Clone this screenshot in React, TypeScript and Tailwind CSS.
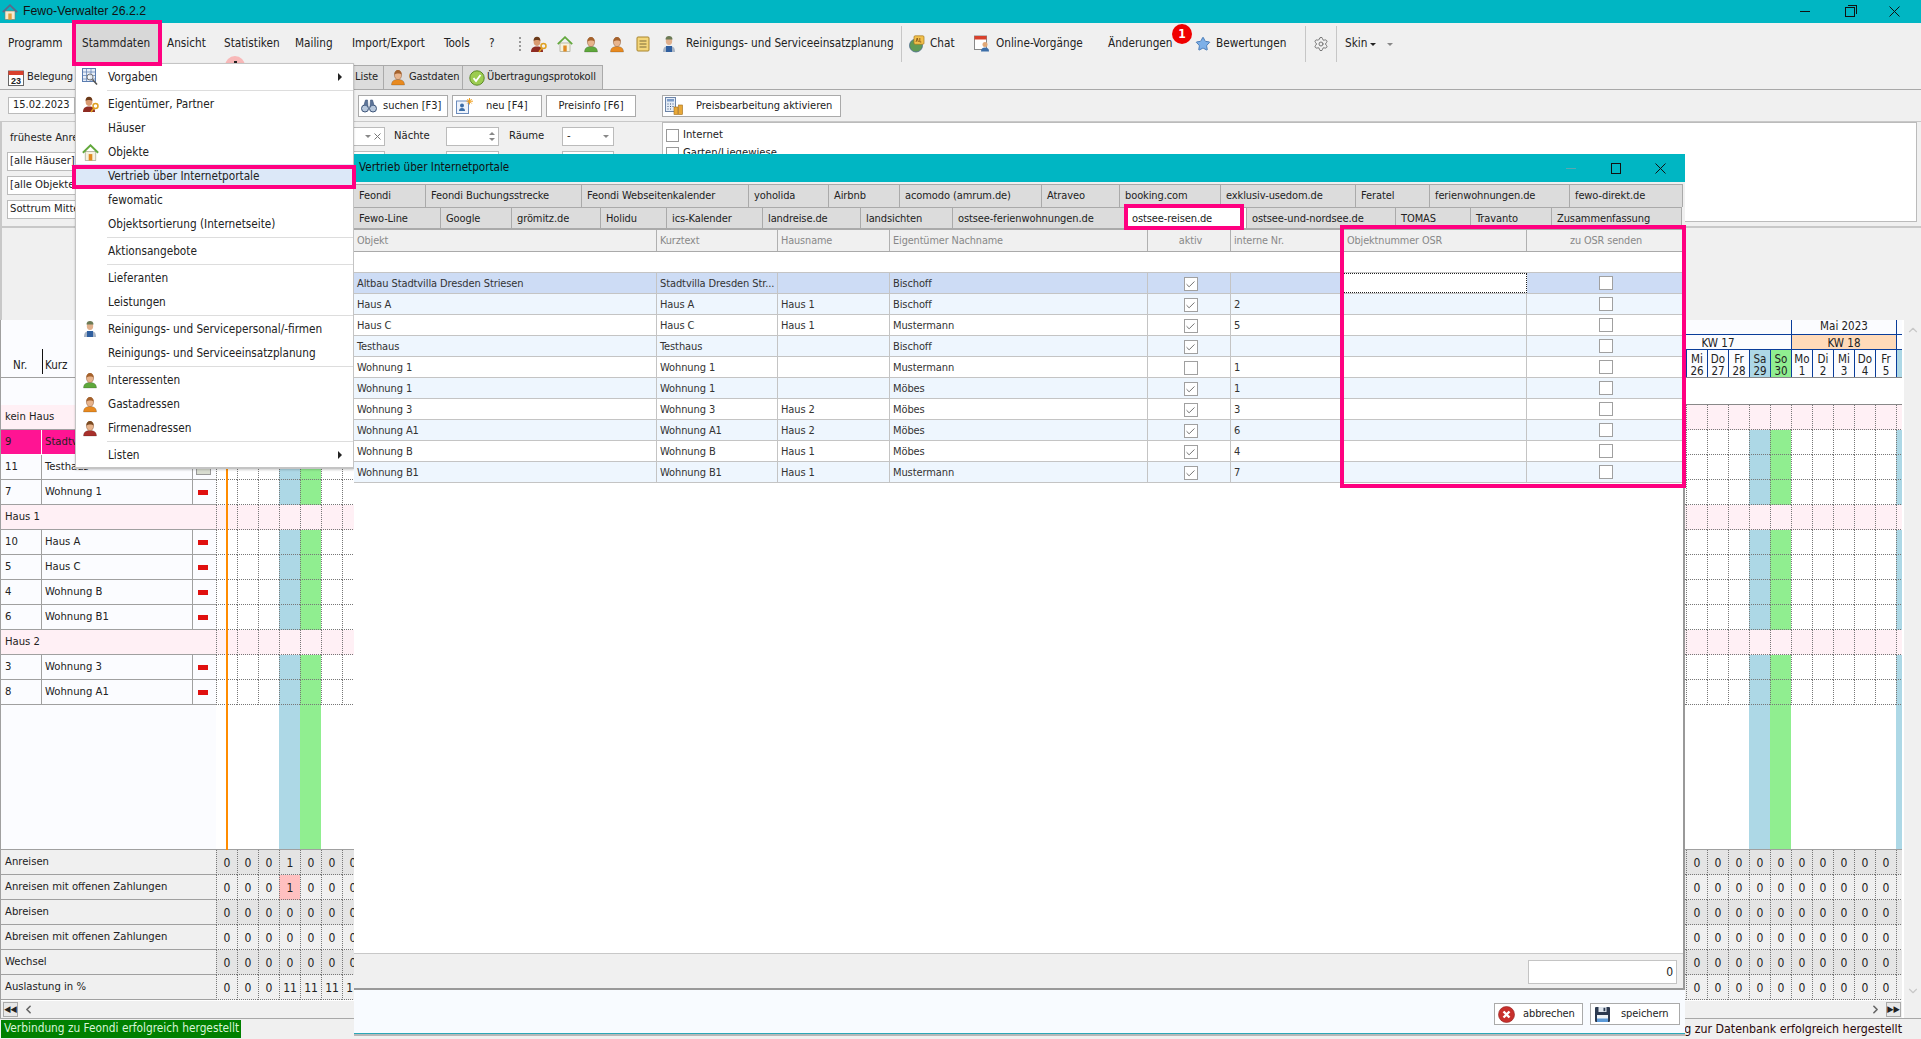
import React from "react"
import { Check, ChevronDown, ChevronLeft, ChevronRight, ChevronUp, Settings, Star } from "lucide-react"

// --- small drawn icons ---

function Person({ shirt = "#5fa83c", skin = "#e8b48c", hair = "#a5622c" }: { shirt?: string; skin?: string; hair?: string }) {
  return (
    <svg width="16" height="17" viewBox="0 0 16 17" className="shrink-0">
      <path d="M1.5 16c0-4 2.5-5.500 6.500-5.500s6.500 1.500 6.500 5.500z" fill={shirt} stroke="#00000055" strokeWidth=".5" />
      <ellipse cx="8" cy="6" rx="3.600" ry="4.600" fill={skin} stroke="#8a5a3a" strokeWidth=".5" />
      <path d="M4.400 5.500C4.400 2.500 6 1 8 1s3.600 1.500 3.600 4.500C10.500 4 6 4 4.400 5.500z" fill={hair} />
    </svg>
  )
}

function Owner() {
  return (
    <svg width="18" height="17" viewBox="0 0 18 17" className="shrink-0">
      <path d="M1 16c0-4 2-5.500 6-5.500s6 1.500 6 5.500z" fill="#8e2a22" />
      <ellipse cx="7" cy="5.500" rx="3.400" ry="4.400" fill="#d99a70" />
      <path d="M3.600 5C3.600 2 5 .8 7 .8S10.400 2 10.400 5C9 3.600 5 3.600 3.600 5z" fill="#6a3a1a" />
      <circle cx="13.500" cy="10" r="2.500" fill="none" stroke="#e0a020" strokeWidth="1.500" />
      <path d="M12 12l-3 4" stroke="#e0a020" strokeWidth="1.500" />
    </svg>
  )
}

function Worker() {
  return (
    <svg width="16" height="18" viewBox="0 0 16 18" className="shrink-0">
      <path d="M2 17c0-4.500 2-6 6-6s6 1.500 6 6z" fill="#a8b4c4" />
      <rect x="5" y="11" width="6" height="6" fill="#2f5f9f" />
      <ellipse cx="8" cy="6" rx="3.200" ry="4" fill="#e0b08c" />
      <path d="M4.500 4.500C4.500 2 6 1 8 1s3.500 1 3.500 3.500z" fill="#6b7a55" />
    </svg>
  )
}

function HouseIcon({ size = 16 }: { size?: number }) {
  return (
    <svg width={size} height={size} viewBox="0 0 16 16" className="shrink-0">
      <rect x="3" y="7" width="10" height="8.500" fill="#f6f2df" stroke="#9a9a80" strokeWidth=".6" />
      <path d="M.8 8.200 8 1.200l7.200 7" fill="none" stroke="#62a83c" strokeWidth="1.800" />
      <rect x="6.300" y="9.500" width="3.400" height="6" fill="#e08a20" />
    </svg>
  )
}

function AppHouse() {
  return (
    <svg width="16" height="16" viewBox="0 0 16 16" className="shrink-0">
      <rect x="3" y="7" width="10" height="8.500" fill="#f4ead0" stroke="#7a7a6a" strokeWidth=".6" />
      <path d="M.8 8.200 8 1.200l7.200 7" fill="none" stroke="#5a6a8a" strokeWidth="1.800" />
      <rect x="6.300" y="9.500" width="3.400" height="6" fill="#e0a040" />
    </svg>
  )
}

function CalendarIcon() {
  return (
    <svg width="16" height="17" viewBox="0 0 16 17" className="shrink-0">
      <rect x=".5" y="2" width="15" height="14.500" fill="#fff" stroke="#666" />
      <rect x=".5" y="2" width="15" height="4" fill="#d8402c" />
      <text x="8" y="14.500" fontSize="9" fontWeight="700" textAnchor="middle" fill="#222" fontFamily="Liberation Sans">23</text>
    </svg>
  )
}

function Notebook() {
  return (
    <svg width="14" height="16" viewBox="0 0 14 16" className="shrink-0">
      <rect x="1" y="1" width="12" height="14" rx="1" fill="#f4d67a" stroke="#a8842c" />
      <path d="M3.500 5h7M3.500 8h7M3.500 11h7" stroke="#7a6a3a" />
    </svg>
  )
}

function ChatIcon() {
  return (
    <svg width="16" height="18" viewBox="0 0 16 18" className="shrink-0">
      <circle cx="7" cy="10.500" r="6.500" fill="#5f9a55" stroke="#46688a" strokeWidth=".8" />
      <rect x="5" y=".8" width="10" height="8.500" rx="1.200" fill="#f2c04c" stroke="#a87a1c" strokeWidth=".7" />
      <path d="M7 7l1.200-4 1.200 4M10.800 3v4h1.500" fill="none" stroke="#7a4a10" strokeWidth=".8" />
    </svg>
  )
}

function OnlineIcon() {
  return (
    <svg width="16" height="17" viewBox="0 0 16 17" className="shrink-0">
      <rect x=".5" y="1" width="12" height="13.500" fill="#fff" stroke="#888" />
      <rect x=".5" y="1" width="12" height="3.500" fill="#d8402c" />
      <circle cx="11" cy="9.500" r="2.500" fill="#e0a878" />
      <path d="M7 16.500c0-3 1.500-4 4-4s4 1 4 4z" fill="#3c6ea8" />
    </svg>
  )
}

function Binoculars() {
  return (
    <svg width="16" height="14" viewBox="0 0 16 14" className="shrink-0">
      <circle cx="4" cy="9.500" r="3.500" fill="#b8c8dc" stroke="#3c5478" />
      <circle cx="12" cy="9.500" r="3.500" fill="#b8c8dc" stroke="#3c5478" />
      <path d="M3 6l1.500-5h2L7 8M13 6l-1.500-5h-2L9 8" fill="#5c7498" stroke="#3c5478" strokeWidth=".6" />
    </svg>
  )
}

function NewCard() {
  return (
    <svg width="17" height="16" viewBox="0 0 17 16" className="shrink-0">
      <rect x=".5" y="3" width="12" height="12.500" fill="#eef3fb" stroke="#6c8cbc" />
      <circle cx="6" cy="7.500" r="2" fill="#3c6ea8" />
      <path d="M3 13c0-2 1-3 3-3s3 1 3 3z" fill="#3c6ea8" />
      <path d="M13.500 0v6.500M10.500 3.200h6.500M11.300 1l4.400 4.500M15.700 1l-4.400 4.500" stroke="#f0a020" />
    </svg>
  )
}

function CalcIcon() {
  return (
    <svg width="18" height="18" viewBox="0 0 18 18" className="shrink-0">
      <rect x=".5" y=".5" width="10" height="14" fill="#e4ecf6" stroke="#6c84a8" />
      <rect x="2" y="2" width="7" height="2.500" fill="#7c9cc8" />
      <path d="M2.500 7h1M5 7h1M7.500 7h1M2.500 9.500h1M5 9.500h1M7.500 9.500h1M2.500 12h1M5 12h1" stroke="#3c5478" />
      <rect x="9" y="10" width="4" height="7.500" fill="#e8a838" stroke="#a06c18" strokeWidth=".6" />
      <rect x="13.500" y="8" width="4" height="9.500" fill="#e8a838" stroke="#a06c18" strokeWidth=".6" />
    </svg>
  )
}

function OkIcon() {
  return (
    <svg width="16" height="16" viewBox="0 0 16 16" className="shrink-0">
      <circle cx="8" cy="8" r="7.200" fill="#9ccc50" stroke="#5c8a28" />
      <path d="M4.500 8.200 7 11l4.500-6" fill="none" stroke="#fff" strokeWidth="1.800" />
    </svg>
  )
}

function VorgabenIcon() {
  return (
    <svg width="17" height="18" viewBox="0 0 17 18" className="shrink-0">
      <rect x=".5" y=".5" width="13" height="13" fill="#e8eff9" stroke="#5a7cb0" />
      <path d="M.5 4h13M.5 7.500h13M.5 11h13M4.500.5v13M9 .5v13" stroke="#5a7cb0" strokeWidth=".7" />
      <circle cx="8" cy="9" r="3" fill="#ffffffaa" stroke="#777" />
      <path d="M10.500 11.500 15 16.500" stroke="#555" strokeWidth="1.600" />
    </svg>
  )
}

function Cancel() {
  return (
    <svg width="17" height="17" viewBox="0 0 17 17" className="shrink-0">
      <circle cx="8.500" cy="8.500" r="8" fill="#c8302c" stroke="#902020" strokeWidth=".6" />
      <path d="M5.500 5.500l6 6M11.500 5.500l-6 6" stroke="#fff" strokeWidth="2.400" />
    </svg>
  )
}

function Floppy() {
  return (
    <svg width="15" height="15" viewBox="0 0 15 15" className="shrink-0">
      <rect width="15" height="15" rx="1" fill="#2c3a50" />
      <rect x="3.500" y="0" width="8" height="5" fill="#dfe6ee" />
      <rect x="8.500" y=".8" width="1.800" height="3.400" fill="#2c3a50" />
      <rect x="2" y="8" width="11" height="7" fill="#eef3f8" />
      <rect x="2" y="11.500" width="11" height="3.500" fill="#5c9ad8" />
    </svg>
  )
}

function WinMin({ className = "" }: { className?: string }) {
  return <div className={`h-px w-[10px] ${className}`} />
}

function WinClose() {
  return (
    <svg width="11" height="11" viewBox="0 0 11 11">
      <path d="M.5.5l10 10M10.500.5l-10 10" stroke="#111" strokeWidth="1" />
    </svg>
  )
}

function WinCloseSmall() {
  return (
    <svg width="7" height="7" viewBox="0 0 7 7">
      <path d="M.5.5l6 6M6.500.5l-6 6" stroke="#777" />
    </svg>
  )
}

// --- app window top ---

function TitleBar() {
  return (
    <div className="flex h-[23px] items-center bg-[#00b6c3] pl-[2px]">
      <AppHouse />
      <span className="ml-[5px] font-['Liberation_Sans',sans-serif] text-[12.300px] text-[#111]">Fewo-Verwalter 26.2.2</span>
      <div className="ml-auto flex items-center">
        <div className="flex w-[45px] justify-center"><WinMin className="bg-[#111]" /></div>
        <div className="flex w-[45px] justify-center">
          <div className="relative h-[10px] w-[10px] border border-[#111] before:absolute before:-right-[3px] before:-top-[3px] before:h-[9px] before:w-[9px] before:border-r before:border-t before:border-[#111]" />
        </div>
        <div className="flex w-[46px] justify-center pr-[2px]"><WinClose /></div>
        <div className="w-[3px]" />
      </div>
    </div>
  )
}

const menuItems = [
  { label: "Programm", cls: "w-[76px] pl-[8px]" },
  { label: "Stammdaten", cls: "w-[91px] pl-[6px]" },
  { label: "Ansicht", cls: "w-[57px]" },
  { label: "Statistiken", cls: "w-[71px]" },
  { label: "Mailing", cls: "w-[57px]" },
  { label: "Import/Export", cls: "w-[92px]" },
  { label: "Tools", cls: "w-[45px]" },
  { label: "?", cls: "w-[25px]" },
]

function RibbonSep() {
  return <div className="h-[36px] w-px bg-[#c6c6c6]" />
}

function Ribbon() {
  return (
    <div className="flex h-[67px] flex-col border-b border-[#a8a8a8]">
      <div className="flex h-[42px] items-center">
        {menuItems.map((m) => (
          <div key={m.label} className={`flex h-full items-center ${m.cls} ${m.label === "Stammdaten" ? "relative" : ""}`}>
            {m.label === "Stammdaten" && <div className="absolute -top-[1px] bottom-0 left-0 w-[84px] bg-[#d8d8d8]" />}
            <span className="relative">{m.label}</span>
          </div>
        ))}
        <div className="flex w-[12px] flex-col items-center gap-[2px]">
          <div className="h-[2px] w-[2px] bg-[#999]" />
          <div className="h-[2px] w-[2px] bg-[#999]" />
          <div className="h-[2px] w-[2px] bg-[#999]" />
          <div className="h-[2px] w-[2px] bg-[#999]" />
        </div>
        <div className="flex w-[26px] justify-center"><Owner /></div>
        <div className="flex w-[26px] justify-center"><HouseIcon /></div>
        <div className="flex w-[26px] justify-center"><Person /></div>
        <div className="flex w-[26px] justify-center"><Person shirt="#e88a20" /></div>
        <div className="flex w-[26px] justify-center"><Notebook /></div>
        <div className="flex w-[26px] justify-center"><Worker /></div>
        <span className="ml-[4px] w-[215px]">Reinigungs- und Serviceeinsatzplanung</span>
        <RibbonSep />
        <div className="flex w-[72px] items-center pl-[7px]"><ChatIcon /><span className="ml-[5px]">Chat</span></div>
        <div className="flex w-[134px] items-center"><OnlineIcon /><span className="ml-[6px]">Online-Vorgänge</span></div>
        <span className="w-[87px]">Änderungen</span>
        <div className="flex w-[110px] items-center">
          <Star size={16} fill="#7db0e8" stroke="#4a7cb8" strokeWidth={1.500} />
          <span className="ml-[5px]">Bewertungen</span>
        </div>
        <RibbonSep />
        <div className="flex w-[30px] justify-center"><Settings size={16} stroke="#777" strokeWidth={1.500} /></div>
        <RibbonSep />
        <span className="ml-[8px]">Skin</span>
        <div className="ml-[3px] h-0 w-0 border-x-[3px] border-t-[3px] border-x-transparent border-t-[#222]" />
        <div className="ml-[11px] h-0 w-0 border-x-[3px] border-t-[3px] border-x-transparent border-t-[#888]" />
      </div>
      <div className="flex h-[24px] items-stretch whitespace-nowrap pl-[5px] text-[11px] tracking-[-0.1px]">
        <div className="flex w-[70px] items-center gap-[3px] pl-[3px]"><CalendarIcon />Belegung</div>
        <div className="ml-[225px] flex w-[84px] items-center justify-end border border-b-0 border-[#aaa] bg-[#dcdcdc] pr-[5px]">Liste</div>
        <div className="flex w-[79px] items-center gap-[3px] border-r border-t border-[#aaa] bg-[#dcdcdc] pl-[6px]">
          <Person shirt="#e88a20" />Gastdaten
        </div>
        <div className="flex w-[140px] items-center gap-[2px] border-r border-t border-[#aaa] bg-[#dcdcdc] pl-[6px]">
          <OkIcon />Übertragungsprotokoll
        </div>
      </div>
    </div>
  )
}

function ActionButton({ className, children }: { className: string; children: React.ReactNode }) {
  return <div className={`flex h-[22px] items-center whitespace-nowrap border border-[#aaa] bg-white pt-[1px] ${className}`}>{children}</div>
}

function ActionRow() {
  return (
    <div className="flex h-[32px] items-center border-b border-[#c8c8c8] pl-[8px] text-[11px]">
      <div className="flex h-[17px] w-[67px] items-center border border-[#bbb] bg-white pl-[4px]">15.02.2023</div>
      <ActionButton className="ml-[283px] w-[90px] pl-[2px]">
        <Binoculars />
        <span className="ml-[6px]">suchen [F3]</span>
      </ActionButton>
      <ActionButton className="ml-[4px] w-[90px] pl-[3px]">
        <NewCard />
        <span className="ml-[13px]">neu [F4]</span>
      </ActionButton>
      <ActionButton className="ml-[4px] w-[90px] justify-center">Preisinfo [F6]</ActionButton>
      <ActionButton className="ml-[26px] w-[179px] pl-[2px]">
        <CalcIcon />
        <span className="ml-[13px]">Preisbearbeitung aktivieren</span>
      </ActionButton>
    </div>
  )
}

function FilterPanel() {
  const box = "flex h-[19px] items-center border border-[#bbb] bg-white"
  const leftBox = "flex h-[19px] w-[130px] items-center whitespace-nowrap border border-[#bbb] bg-white pl-[2px] pt-[1px]"
  return (
    <div className="flex h-[106px] items-start border-b-2 border-l-2 border-[#c8c8c8] text-[11.200px]">
      <div className="flex w-[73px] flex-col pl-[5px] pt-[8px]">
        <span className="whitespace-nowrap pl-[3px]">früheste Anreise</span>
        <div className={`${leftBox} mt-[5px]`}>[alle Häuser]</div>
        <div className={`${leftBox} mt-[5px]`}>[alle Objekte]</div>
        <div className={`${leftBox} mt-[5px]`}>Sottrum Mitte</div>
      </div>
      <div className="flex w-[587px] flex-col pl-[277px] pt-[5px]">
        <div className="flex items-center">
          <div className={`${box} w-[33px] justify-end gap-[3px] pr-[3px] text-[#777]`}>
            <div className="h-0 w-0 border-x-[3px] border-t-[3px] border-x-transparent border-t-[#888]" />
            <WinCloseSmall />
          </div>
          <span className="ml-[9px] w-[52px]">Nächte</span>
          <div className={`${box} w-[53px] flex-col items-end justify-center gap-[3px] pr-[3px]`}>
            <div className="h-0 w-0 border-x-[3px] border-b-[3px] border-x-transparent border-b-[#888]" />
            <div className="h-0 w-0 border-x-[3px] border-t-[3px] border-x-transparent border-t-[#888]" />
          </div>
          <span className="ml-[10px] w-[53px]">Räume</span>
          <div className={`${box} w-[52px] justify-between px-[4px]`}>
            -
            <div className="h-0 w-0 border-x-[3px] border-t-[3px] border-x-transparent border-t-[#888]" />
          </div>
        </div>
        <div className="mt-[5px] flex items-center">
          <div className={`${box} w-[33px]`} />
          <div className={`${box} ml-[61px] w-[53px]`} />
          <div className={`${box} ml-[63px] w-[52px]`} />
        </div>
      </div>
      <div className="h-[100px] w-[1255px] border border-[#bbb] bg-white pl-[3px] pt-[3px]">
        <div className="flex h-[18px] items-center gap-[4px]"><div className="h-[13px] w-[13px] border border-[#999] bg-white" />Internet</div>
        <div className="flex h-[18px] items-center gap-[4px]"><div className="h-[13px] w-[13px] border border-[#999] bg-white" />Garten/Liegewiese</div>
      </div>
    </div>
  )
}

// --- planner grid ---

const DAY_COUNT = 81
const days = Array.from({ length: DAY_COUNT }, (_, i) => new Date(2023, 1, 15 + i))
const DAY_NAMES = ["So", "Mo", "Di", "Mi", "Do", "Fr", "Sa"]
const MONTH_NAMES = ["Januar", "Februar", "März", "April", "Mai"]

function isoWeek(d: Date) {
  const t = new Date(d.getFullYear(), d.getMonth(), d.getDate())
  t.setDate(t.getDate() + 3 - ((t.getDay() + 6) % 7))
  const jan4 = new Date(t.getFullYear(), 0, 4)
  return 1 + Math.round(((t.getTime() - jan4.getTime()) / 86400000 - 3 + ((jan4.getDay() + 6) % 7)) / 7)
}

// the last column is only a sliver, month and week cells stop before it
function groupBy(key: (d: Date) => number) {
  const groups: { key: number; count: number }[] = []
  days.slice(0, DAY_COUNT - 1).forEach((d) => {
    const last = groups[groups.length - 1]
    if (last && last.key === key(d)) last.count++
    else groups.push({ key: key(d), count: 1 })
  })
  return groups
}

function DayCells({ group }: { group: boolean }) {
  return (
    <div className="flex h-full w-[1686px] overflow-hidden">
      {days.map((d, i) => {
        const wd = d.getDay()
        const bg = group ? "bg-[#fff0f5]" : wd === 6 ? "bg-[#add8e6]" : wd === 0 ? "bg-[#90ee90]" : "bg-white"
        return <div key={i} className={`h-full w-[21px] shrink-0 border-b border-l border-dotted border-[#777] ${bg}`} />
      })}
    </div>
  )
}

function PlainCells() {
  return (
    <div className="flex h-full w-[1686px] overflow-hidden">
      {days.map((d, i) => {
        const wd = d.getDay()
        const bg = wd === 6 ? "bg-[#add8e6]" : wd === 0 ? "bg-[#90ee90]" : "bg-white"
        return <div key={i} className={`h-full w-[21px] shrink-0 ${bg}`} />
      })}
    </div>
  )
}

function GroupRow({ label }: { label: string }) {
  return (
    <div className="flex h-[25px]">
      <div className="flex w-[215px] items-center border-b border-[#a0a0a0] bg-[#fff0f5] pl-[4px] pt-[1px]">{label}</div>
      <DayCells group />
    </div>
  )
}

function ObjectRow({ nr, name, active, icon }: { nr: string; name: string; active?: boolean; icon?: boolean }) {
  return (
    <div className="flex h-[25px]">
      <div className={`flex w-[41px] items-center border-b border-r pl-[4px] pt-[1px] ${active ? "border-white bg-[#ff1493]" : "border-[#a0a0a0] bg-[#fbfcff]"}`}>{nr}</div>
      <div className={`flex w-[151px] items-center border-b border-r pl-[3px] pt-[1px] ${active ? "border-white bg-[#ff1493]" : "border-[#a0a0a0] bg-[#fbfcff]"}`}>{name}</div>
      <div className="flex w-[23px] items-center justify-center border-b border-[#a0a0a0] bg-[#fbfcff] pr-[3px]">
        {icon ? <div className="mt-[4px] h-[11px] w-[15px] border border-[#999] bg-[#d8dcd0]" /> : <div className="h-[5px] w-[10px] bg-[#e01010]" />}
      </div>
      <DayCells group={false} />
    </div>
  )
}

const summaryRows = [
  { label: "Anreisen", values: { 3: "1" } as Record<number, string> },
  { label: "Anreisen mit offenen Zahlungen", values: { 3: "1" } as Record<number, string> },
  { label: "Abreisen", values: {} as Record<number, string> },
  { label: "Abreisen mit offenen Zahlungen", values: {} as Record<number, string> },
  { label: "Wechsel", values: {} as Record<number, string> },
  { label: "Auslastung in %", values: { 3: "11", 4: "11", 5: "11", 6: "11" } as Record<number, string> },
]

function SummaryRow({ index }: { index: number }) {
  const row = summaryRows[index]
  const shade = index % 2 === 0 ? "bg-[#e4e4e4]" : "bg-[#f0f0f0]"
  return (
    <div className="flex h-[25px]">
      <div className="flex w-[215px] items-center border-b border-[#a0a0a0] bg-[#f0f0f0] pl-[4px] pt-[1px]">{row.label}</div>
      <div className="flex h-full w-[1686px] overflow-hidden">
        {days.map((_, i) => {
          const warn = index === 1 && i === 3
          return (
            <div
              key={i}
              className={`flex h-full w-[21px] shrink-0 items-center justify-center border-b border-l border-dotted border-[#777] pt-[1px] text-[12px] ${warn ? "bg-[#ffc0c0]" : shade}`}
            >
              {i < DAY_COUNT - 1 ? row.values[i] ?? "0" : ""}
            </div>
          )
        })}
      </div>
    </div>
  )
}

function CalendarHead() {
  const months = groupBy((d) => d.getMonth())
  const weeks = groupBy(isoWeek)
  return (
    <div className="flex h-[58px] w-[1686px] flex-col overflow-hidden border-b border-[#888] bg-[#fbfcff] text-[11.500px]">
      <div className="flex h-[15px] shrink-0 border-b border-[#0a3d9a]">
        {months.map((m) => (
          <div
            key={m.key}
            style={{ width: m.count * 21 }}
            className="flex shrink-0 items-center justify-center border-l border-[#0a3d9a]"
          >
            {m.count > 3 ? `${MONTH_NAMES[m.key]} 2023` : ""}
          </div>
        ))}
        <div className="w-[21px] shrink-0 border-l border-[#0a3d9a]" />
      </div>
      <div className="flex h-[15px] shrink-0 border-b border-[#0a3d9a]">
        {weeks.map((w) => (
          <div
            key={w.key}
            style={{ width: w.count * 21 }}
            className={`flex shrink-0 items-center justify-center border-l border-[#0a3d9a] pt-[3px] ${w.key % 2 === 0 ? "bg-[#ffdab9]" : ""}`}
          >
            KW {w.key}
          </div>
        ))}
        <div className="w-[21px] shrink-0 border-l border-[#0a3d9a]" />
      </div>
      {[0, 1].map((r) => (
        <div key={r} className={`flex shrink-0 ${r === 0 ? "h-[15px]" : "h-[12px]"}`}>
          {days.map((d, i) => {
            const wd = d.getDay()
            const bg = wd === 6 ? "bg-[#add8e6]" : wd === 0 ? "bg-[#90ee90]" : ""
            return (
              <div key={i} className={`flex w-[21px] shrink-0 items-center justify-center border-l border-[#0a3d9a] ${r === 0 ? "pt-[4px]" : "pt-[2px]"} ${bg}`}>
                {i === DAY_COUNT - 1 ? "" : r === 0 ? DAY_NAMES[wd] : d.getDate()}
              </div>
            )
          })}
        </div>
      ))}
    </div>
  )
}

function Planner() {
  return (
    <div className="relative flex h-[698px] text-[11.200px]">
      <div className="flex w-[1902px] flex-col border-l border-[#a0a0a0]">
        <div className="flex h-[58px]">
          <div className="flex w-[215px] items-end border-b border-[#a0a0a0] bg-[#fbfcff] pb-[3px] text-[11.500px]">
            <span className="w-[41px] pl-[12px]">Nr.</span>
            <span className="border-l border-[#111] pl-[2px] pt-[8px]">Kurz</span>
          </div>
          <CalendarHead />
        </div>
        <div className="flex h-[27px] w-[1901px]">
          <div className="w-[215px] bg-[#fbfcff]" />
          <div className="flex-1 border-b border-[#888] bg-white" />
        </div>
        <GroupRow label="kein Haus" />
        <ObjectRow nr="9" name="Stadtvilla Dresden" active />
        <ObjectRow nr="11" name="Testhaus" icon />
        <ObjectRow nr="7" name="Wohnung 1" />
        <GroupRow label="Haus 1" />
        <ObjectRow nr="10" name="Haus A" />
        <ObjectRow nr="5" name="Haus C" />
        <ObjectRow nr="4" name="Wohnung B" />
        <ObjectRow nr="6" name="Wohnung B1" />
        <GroupRow label="Haus 2" />
        <ObjectRow nr="3" name="Wohnung 3" />
        <ObjectRow nr="8" name="Wohnung A1" />
        <div className="flex h-[145px] border-b border-[#a0a0a0]">
          <div className="w-[215px] bg-[#fbfcff]" />
          <PlainCells />
        </div>
        {summaryRows.map((r, i) => (
          <SummaryRow key={r.label} index={i} />
        ))}
        <div className="flex h-[18px] items-center border-t border-white pl-[2px] pr-[1px]">
          <div className="flex h-[15px] w-[15px] items-center justify-center border border-[#aaa] bg-[#e8e8e8] text-[9px] leading-none">◀◀</div>
          <ChevronLeft size={13} strokeWidth={3} className="ml-[4px] text-[#666]" />
          <ChevronRight size={13} strokeWidth={3} className="ml-auto mr-[4px] text-[#666]" />
          <div className="flex h-[15px] w-[15px] items-center justify-center border border-[#aaa] bg-[#e8e8e8] text-[9px] leading-none">▶▶</div>
        </div>
      </div>
      <div className="flex w-[19px] flex-col items-center border-l-2 border-white pb-[20px] pt-[2px]">
        <ChevronUp size={14} strokeWidth={2} className="mt-[1px] text-[#c8c8c8]" />
        <ChevronDown size={14} strokeWidth={2} className="mt-auto text-[#c8c8c8]" />
      </div>
      <div className="absolute bottom-[168px] left-[226px] top-[58px] w-[2px] bg-[#ff8c00]" />
    </div>
  )
}

function StatusBar() {
  return (
    <div className="flex h-[21px] items-center justify-between whitespace-nowrap border-t border-[#a8a8a8] pl-[1px] pr-[19px]">
      <div className="flex h-[18px] w-[240px] items-center bg-[#008000] pl-[3px] text-[11.800px] text-[#d8f5d8]">Verbindung zu Feondi erfolgreich hergestellt</div>
      <span className="text-[12.300px] text-[#2a0808]">Verbindung zur Datenbank erfolgreich hergestellt</span>
    </div>
  )
}

// --- Stammdaten dropdown ---

type MenuEntry = { label?: string; icon?: React.ReactNode; sub?: boolean; hot?: boolean }

const stammdatenMenu: MenuEntry[] = [
  { label: "Vorgaben", icon: <VorgabenIcon />, sub: true },
  {},
  { label: "Eigentümer, Partner", icon: <Owner /> },
  { label: "Häuser" },
  { label: "Objekte", icon: <HouseIcon size={17} /> },
  { label: "Vertrieb über Internetportale", hot: true },
  { label: "fewomatic" },
  { label: "Objektsortierung (Internetseite)" },
  {},
  { label: "Aktionsangebote" },
  {},
  { label: "Lieferanten" },
  { label: "Leistungen" },
  {},
  { label: "Reinigungs- und Servicepersonal/-firmen", icon: <Worker /> },
  { label: "Reinigungs- und Serviceeinsatzplanung" },
  {},
  { label: "Interessenten", icon: <Person /> },
  { label: "Gastadressen", icon: <Person shirt="#e88a20" /> },
  { label: "Firmenadressen", icon: <Person shirt="#a8302c" hair="#7a4a22" /> },
  {},
  { label: "Listen", sub: true },
]

function StammdatenMenu() {
  return (
    <div className="absolute left-[75px] top-[63px] flex h-[406px] w-[279px] flex-col border border-b-2 border-[#c4c4c4] bg-white pt-[1px] shadow-[0_1px_2px_#0003]">
      {stammdatenMenu.map((m, i) =>
        m.label ? (
          <div key={i} className={`flex h-[24px] shrink-0 items-center ${m.hot ? "bg-[#dce8f8]" : ""}`}>
            <div className="flex w-[32px] justify-start pl-[6px]">{m.icon}</div>
            <span className="pt-[2px]">{m.label}</span>
            {m.sub && <div className="ml-auto mr-[11px] h-0 w-0 border-y-[4px] border-l-[4px] border-y-transparent border-l-[#222]" />}
          </div>
        ) : (
          <div key={i} className="flex h-[3px] shrink-0 items-center pl-[31px]">
            <div className="h-px w-full bg-[#ddd]" />
          </div>
        ),
      )}
    </div>
  )
}

// --- portal dialog ---

const tabRowOne = [
  { label: "Feondi", w: "w-[72px]" },
  { label: "Feondi Buchungsstrecke", w: "w-[156px]" },
  { label: "Feondi Webseitenkalender", w: "w-[167px]" },
  { label: "yoholida", w: "w-[80px]" },
  { label: "Airbnb", w: "w-[71px]" },
  { label: "acomodo (amrum.de)", w: "w-[142px]" },
  { label: "Atraveo", w: "w-[78px]" },
  { label: "booking.com", w: "w-[101px]" },
  { label: "exklusiv-usedom.de", w: "w-[135px]" },
  { label: "Feratel", w: "w-[74px]" },
  { label: "ferienwohnungen.de", w: "w-[140px]" },
  { label: "fewo-direkt.de", w: "w-[113px]" },
]

const tabRowTwo = [
  { label: "Fewo-Line", w: "w-[87px]" },
  { label: "Google", w: "w-[71px]" },
  { label: "grömitz.de", w: "w-[89px]" },
  { label: "Holidu", w: "w-[66px]" },
  { label: "ics-Kalender", w: "w-[96px]" },
  { label: "landreise.de", w: "w-[98px]" },
  { label: "landsichten", w: "w-[92px]" },
  { label: "ostsee-ferienwohnungen.de", w: "w-[172px]" },
  { label: "ostsee-reisen.de", w: "w-[122px]", on: true },
  { label: "ostsee-und-nordsee.de", w: "w-[149px]" },
  { label: "TOMAS", w: "w-[75px]" },
  { label: "Travanto", w: "w-[81px]" },
  { label: "Zusammenfassung", w: "w-[130px]" },
]

const GRID = "grid grid-cols-[303px_121px_112px_258px_83px_112px_184px_158px]"

const tableRows: [string, string, string, string, boolean, string][] = [
  ["Altbau Stadtvilla Dresden Striesen", "Stadtvilla Dresden Str...", "", "Bischoff", true, ""],
  ["Haus A", "Haus A", "Haus 1", "Bischoff", true, "2"],
  ["Haus C", "Haus C", "Haus 1", "Mustermann", true, "5"],
  ["Testhaus", "Testhaus", "", "Bischoff", true, ""],
  ["Wohnung 1", "Wohnung 1", "", "Mustermann", false, "1"],
  ["Wohnung 1", "Wohnung 1", "", "Möbes", true, "1"],
  ["Wohnung 3", "Wohnung 3", "Haus 2", "Möbes", true, "3"],
  ["Wohnung A1", "Wohnung A1", "Haus 2", "Möbes", true, "6"],
  ["Wohnung B", "Wohnung B", "Haus 1", "Möbes", true, "4"],
  ["Wohnung B1", "Wohnung B1", "Haus 1", "Mustermann", true, "7"],
]

function Tick({ on }: { on: boolean }) {
  return (
    <div className="flex h-[14px] w-[14px] items-center justify-center border border-[#a0a0a0] bg-white">
      {on && <Check size={11} strokeWidth={2} className="text-[#666]" />}
    </div>
  )
}

function PortalDialog() {
  const head = "flex items-center border-r border-[#b0b0b0] pl-[3px] pt-[1px]"
  const cell = "flex items-center overflow-hidden whitespace-nowrap border-r border-[#c4c4c4] pl-[3px] pt-[2px]"
  return (
    <div className="absolute left-[354px] top-[154px] flex h-[882px] w-[1331px] flex-col bg-white text-[11px] tracking-[-0.1px]">
      <div className="flex h-[28px] shrink-0 items-center bg-[#00b6c3] pl-[5px] text-[11.600px] tracking-normal text-[#111]">
        <span>Vertrieb über Internetportale</span>
        <div className="ml-auto flex items-center">
          <div className="flex w-[45px] justify-center"><WinMin className="bg-[#5aa8b0]" /></div>
          <div className="flex w-[45px] justify-center"><div className="h-[11px] w-[10px] border border-[#111]" /></div>
          <div className="flex w-[45px] justify-center"><WinClose /></div>
          <div className="w-[2px]" />
        </div>
      </div>
      <div className="h-[2px] shrink-0 bg-[#f0f0f0]" />
      <div className="flex h-[23px] shrink-0 bg-[#f0f0f0] pr-[2px]">
        {tabRowOne.map((t) => (
          <div key={t.label} className={`flex shrink-0 items-center whitespace-nowrap border-r border-t border-[#aaa] bg-[#dcdcdc] pl-[5px] ${t.w}`}>{t.label}</div>
        ))}
      </div>
      <div className="flex h-[23px] shrink-0 border-b-2 border-[#aaa] bg-[#f0f0f0]">
        {tabRowTwo.map((t) => (
          <div key={t.label} className={`flex shrink-0 items-center whitespace-nowrap border-r border-t border-[#aaa] pl-[5px] pt-[2px] ${t.w} ${t.on ? "bg-white pl-[7px]" : "bg-[#dcdcdc]"}`}>{t.label}</div>
        ))}
      </div>
      <div className={`${GRID} h-[22px] shrink-0 border-b border-[#aaa] bg-[#f0f0f0] text-[10.800px] text-[#888]`}>
        <div className={head}>Objekt</div>
        <div className={head}>Kurztext</div>
        <div className={head}>Hausname</div>
        <div className={head}>Eigentümer Nachname</div>
        <div className={`${head} justify-center pl-0`}>aktiv</div>
        <div className={head}>interne Nr.</div>
        <div className={`${head} pl-[4px]`}>Objektnummer OSR</div>
        <div className="flex items-center justify-center pt-[1px]">zu OSR senden</div>
      </div>
      <div className="h-[21px] shrink-0 border-b border-[#c4c4c4]" />
      {tableRows.map((r, i) => {
        const bg = i === 0 ? "bg-[#cddcf5]" : i % 2 === 1 ? "bg-[#eef6fe]" : "bg-white"
        return (
          <div key={i} className={`${GRID} h-[21px] shrink-0 border-b border-[#c4c4c4] text-[#333] ${bg}`}>
            <div className={cell}>{r[0]}</div>
            <div className={cell}>{r[1]}</div>
            <div className={cell}>{r[2]}</div>
            <div className={cell}>{r[3]}</div>
            <div className={`${cell} justify-center pl-0 pt-0`}><Tick on={r[4]} /></div>
            <div className={cell}>{r[5]}</div>
            <div className={i === 0 ? "border border-dotted border-[#222] bg-white" : cell} />
            <div className="flex items-center justify-center"><Tick on={false} /></div>
          </div>
        )
      })}
      <div className="flex-1" />
      <div className="flex h-[37px] shrink-0 items-center justify-end border-b-2 border-t border-b-[#999] border-t-[#c8c8c8] bg-[#f0f0f0] pr-[8px] pt-[1px]">
        <div className="flex h-[24px] w-[149px] items-center justify-end border border-[#c4c4c4] bg-white pr-[3px] text-[12px]">0</div>
      </div>
      <div className="flex h-[43px] shrink-0 items-center justify-end gap-[7px] bg-[#f8fbff] pr-[5px] pt-[5px]">
        <div className="flex h-[22px] w-[89px] items-center border border-[#aaa] bg-white pl-[3px]">
          <Cancel />
          <span className="ml-[8px]">abbrechen</span>
        </div>
        <div className="flex h-[22px] w-[90px] items-center border border-[#aaa] bg-white pl-[4px]">
          <Floppy />
          <span className="ml-[11px]">speichern</span>
        </div>
      </div>
      <div className="h-px shrink-0 bg-[#2aa8b8]" />
      <div className="h-[2px] shrink-0 bg-[#b8b8b8]" />
      <div className="absolute bottom-[46px] right-0 top-[71px] w-[2px] bg-[#999]" />
    </div>
  )
}

function Highlight({ className }: { className: string }) {
  return <div className={`pointer-events-none absolute border-[4px] border-[#ff0080] ${className}`} />
}

export default function App() {
  return (
    <div className="relative flex h-[1039px] w-[1921px] flex-col overflow-hidden bg-[#f0f0f0] font-['DejaVu_Sans_Condensed','DejaVu_Sans',sans-serif] text-[11.700px] text-[#222]">
      <TitleBar />
      <Ribbon />
      <ActionRow />
      <FilterPanel />
      <div className="h-[92px] border-l-2 border-[#c8c8c8]" />
      <Planner />
      <StatusBar />
      <div className="absolute left-[225px] top-[56px] flex h-[20px] w-[20px] justify-center rounded-full bg-[#f8b8b8] pt-[5px]">
        <div className="h-[2px] w-[3px] bg-[#222]" />
      </div>
      <div className="absolute left-[1172px] top-[24px] flex h-[20px] w-[20px] items-center justify-center rounded-full bg-[#f00000] text-[12px] font-bold text-white">1</div>
      <StammdatenMenu />
      <PortalDialog />
      <Highlight className="left-[72px] top-[20px] h-[46px] w-[90px]" />
      <Highlight className="left-[72px] top-[165px] h-[24px] w-[284px]" />
      <Highlight className="left-[1124px] top-[204px] h-[26px] w-[120px]" />
      <Highlight className="left-[1340px] top-[225px] h-[263px] w-[346px]" />
    </div>
  )
}
